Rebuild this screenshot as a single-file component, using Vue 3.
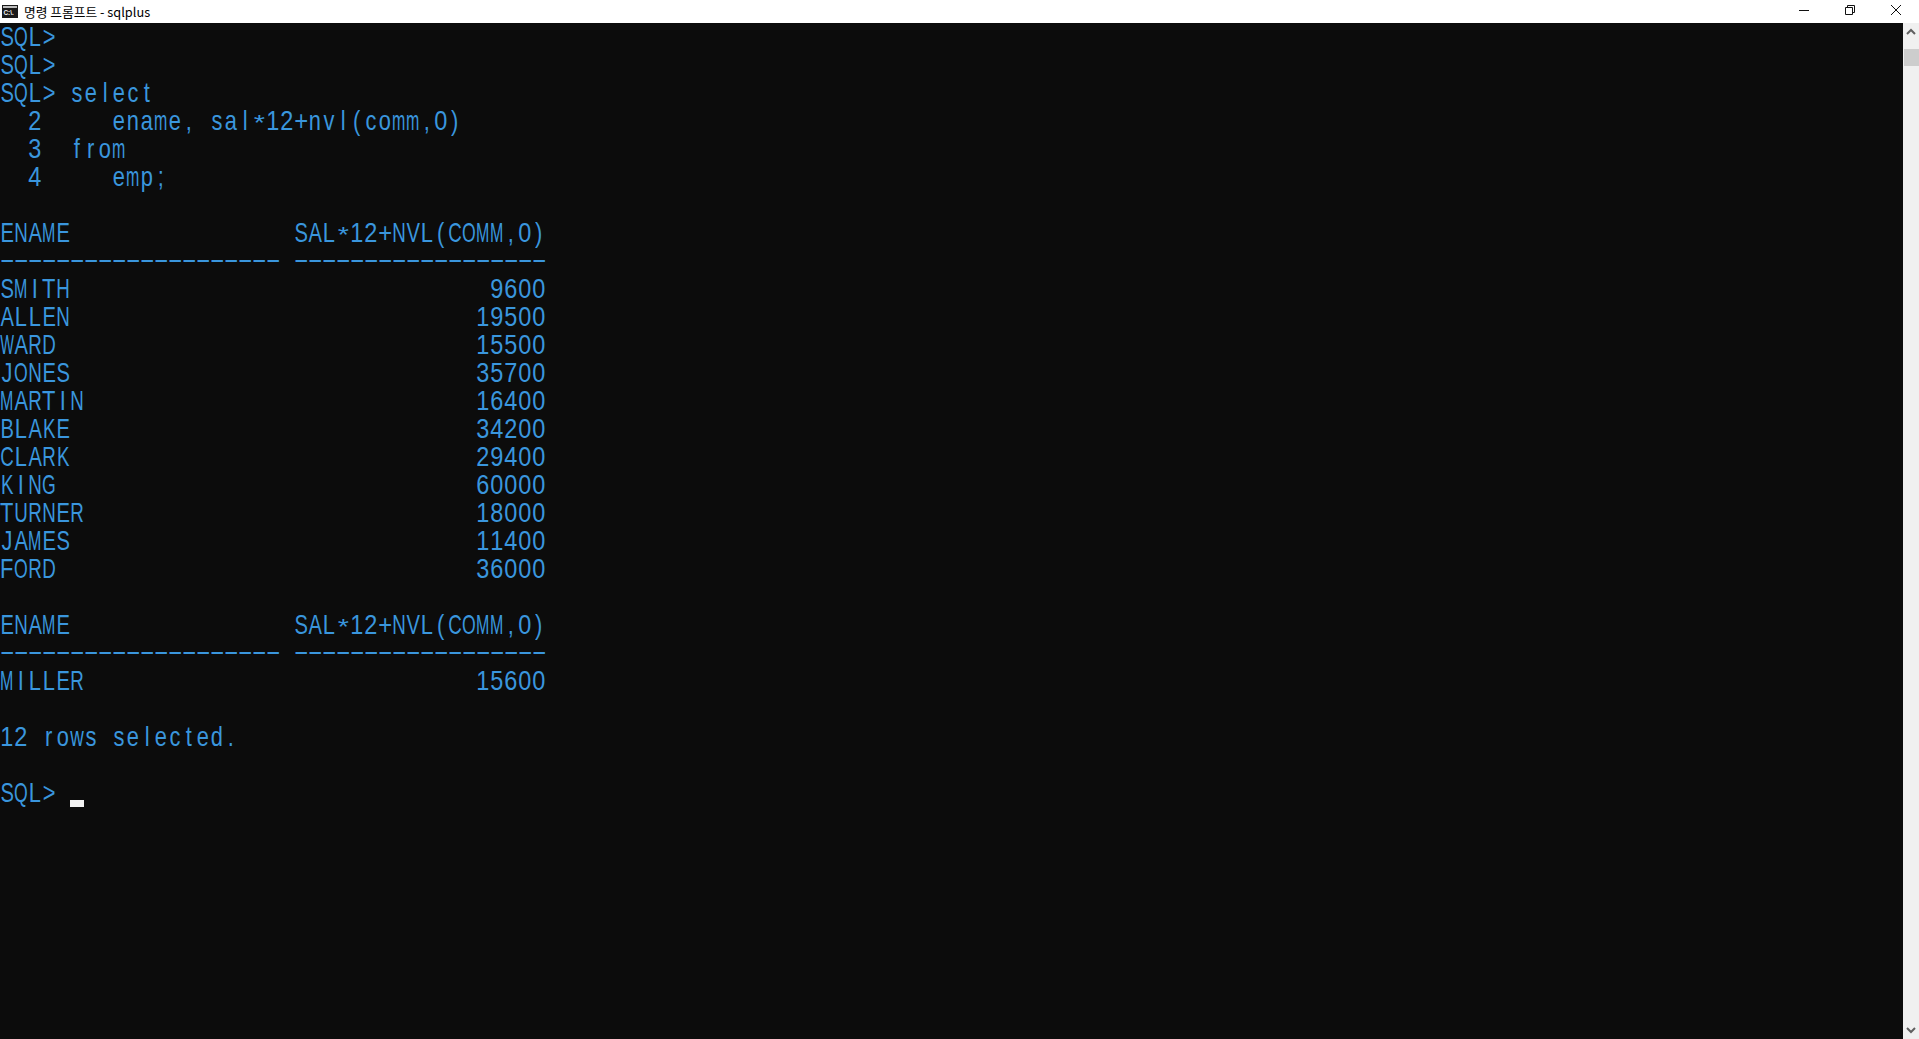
<script setup>
const rows = [
  ['SMITH', 9600], ['ALLEN', 19500], ['WARD', 15500], ['JONES', 35700],
  ['MARTIN', 16400], ['BLAKE', 34200], ['CLARK', 29400], ['KING', 60000],
  ['TURNER', 18000], ['JAMES', 11400], ['FORD', 36000]
]
const row = (a, b) => a.padEnd(20) + ' ' + String(b).padStart(18)
const header = row('ENAME', '').slice(0, 21) + 'SAL*12+NVL(COMM,0)'
const rule = '-'.repeat(20) + ' ' + '-'.repeat(18)
const text = [
  'SQL>', 'SQL>', 'SQL> select',
  '  2     ename, sal*12+nvl(comm,0)',
  '  3  from',
  '  4     emp;',
  '',
  header, rule,
  ...rows.map(r => row(r[0], r[1])),
  '',
  header, rule,
  row('MILLER', 15600),
  '',
  '12 rows selected.',
  '',
  'SQL> '
]
const classOf = c => {
  if (c === '-') return 'dash'
  if (c === '*') return 'star'
  if (c === '+') return 'sign'
  if (c === 'W') return 'widest'
  if ('Mm'.includes(c)) return 'tight'
  if ('OQG'.includes(c)) return 'round'
  if ('CRHDUNKw'.includes(c)) return 'caps'
  if ('ASEBVP'.includes(c)) return 'semi'
  if ('0123456789'.includes(c)) return 'digit'
  return 'plain'
}
const lines = text.map(l => [...l].map(c => ({ c, k: classOf(c) })))
</script>

<template>
  <div class="window">
    <header class="titlebar">
      <svg class="appicon" viewBox="0 0 16 13" width="16" height="13">
        <rect width="16" height="13" fill="#1a1a1a" />
        <rect x="1" y="1" width="14" height="2" fill="#bdbdbd" />
        <text x="1.5" y="10" font-size="6.4" font-weight="700" font-family="Liberation Sans, sans-serif" fill="#f2f2f2">C:\.</text>
      </svg>
      <span class="title">명령 프롬프트 - sqlplus</span>
      <div class="controls">
        <svg class="ctl" viewBox="0 0 46 23" width="46" height="23"><path d="M18 10.5h10" stroke="#111" fill="none" /></svg>
        <svg class="ctl" viewBox="0 0 46 23" width="46" height="23"><path d="M18.5 7.5h7v7h-7zM20.5 7.5v-2h7v7h-2" stroke="#111" fill="none" /></svg>
        <svg class="ctl" viewBox="0 0 46 23" width="46" height="23"><path d="M18 5l10 10M28 5L18 15" stroke="#111" fill="none" /></svg>
      </div>
    </header>
    <div class="body">
      <main class="console">
        <div v-for="(line, i) in lines" :key="i" class="line">
          <span v-for="(g, j) in line" :key="j" class="cell"><span class="glyph" :class="g.k">{{ g.c }}</span></span>
          <span v-if="i === lines.length - 1" class="cursor"></span>
        </div>
      </main>
      <aside class="scrollbar">
        <svg class="arrow" viewBox="0 0 16 17" width="16" height="17"><path d="M4 11l4-4 4 4" stroke="#606060" stroke-width="2" fill="none" /></svg>
        <div class="thumb"></div>
        <div class="track"></div>
        <svg class="arrow" viewBox="0 0 16 17" width="16" height="17"><path d="M4 6l4 4 4-4" stroke="#606060" stroke-width="2" fill="none" /></svg>
      </aside>
    </div>
  </div>
</template>

<style>
html, body { margin: 0; overflow: hidden; background: #0c0c0c; }
</style>

<style scoped>
.window { width: 1919px; height: 1039px; display: flex; flex-direction: column; overflow: hidden; }
.titlebar { height: 23px; flex: none; background: #fff; display: flex; align-items: center; padding-left: 2px; }
.appicon { flex: none; margin-right: 6px; }
.title { font: 12.75px/23px "Noto Sans CJK KR", "Noto Sans", sans-serif; color: #000; }
.controls { margin-left: auto; display: flex; }
.ctl { display: block; }
.body { flex: 1; min-height: 0; display: flex; }
.console { flex: 1; min-width: 0; background: #0c0c0c; color: #3a96dd; font: 28px/28px "Liberation Sans", Arial, sans-serif; }
.line { height: 28px; display: flex; position: relative; white-space: pre; }
.cell { width: 14px; height: 28px; flex: none; display: flex; justify-content: center; }
.glyph { display: block; flex: none; transform-origin: center; }
.plain { transform: scaleX(.78); }
.semi { transform: scaleX(.72); }
.caps { transform: scaleX(.67); }
.round { transform: scaleX(.63); }
.tight { transform: scaleX(.57); }
.widest { transform: scaleX(.52); }
.digit { transform: scaleX(.84); }
.sign { transform: scaleX(.85); }
.star { font-size: 22px; line-height: 31px; height: 28px; transform: scaleX(1.3); }
.dash { font-size: 24px; line-height: 24px; height: 24px; letter-spacing: -.8px; transform: scaleX(1.94); }
.cursor { width: 14px; height: 7px; background: #f2f2f2; align-self: flex-end; }
.scrollbar { width: 16px; flex: none; background: #f0f0f0; display: flex; flex-direction: column; }
.arrow { display: block; flex: none; }
.thumb { height: 17px; margin: 9px 0 0 1px; background: #cdcdcd; flex: none; }
.track { flex: 1; }
</style>
